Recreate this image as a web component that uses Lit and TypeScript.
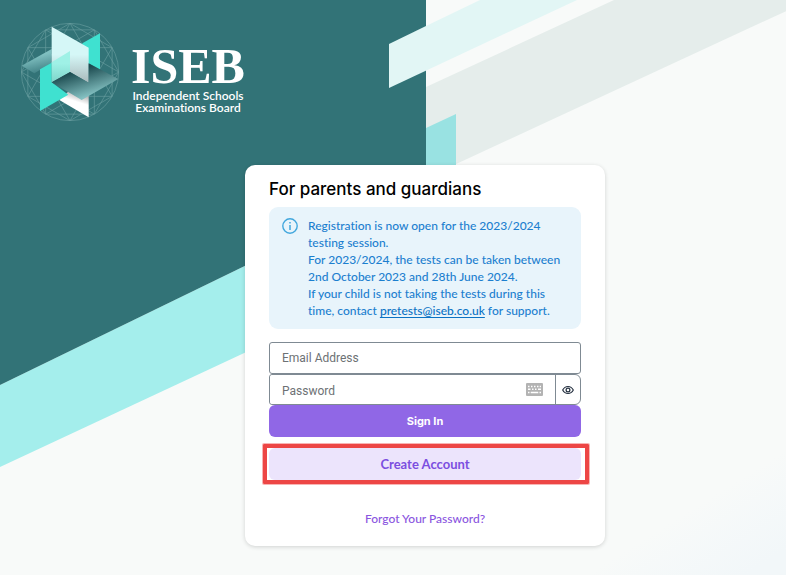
import { LitElement, html, css, svg } from "lit";
import { customElement, state } from "lit/decorators.js";

@customElement("iseb-logo")
export class IsebLogo extends LitElement {
  static styles = css`
    :host {
      display: flex;
      align-items: center;
      gap: 11px;
      color: #fff;
    }
    .mark {
      width: 100px;
      height: 100px;
      flex: none;
    }
    .words {
      display: flex;
      flex-direction: column;
      align-items: center;
      padding-top: 12px;
    }
    .name {
      font: bold 50px/48px "Liberation Serif", serif;
    }
    .full {
      font: 600 12px/12px Lato, sans-serif;
      font-variant-ligatures: none;
      text-align: center;
    }
  `;

  private spokes() {
    const points = Array.from({ length: 12 }, (_, i) => {
      const a = (i * Math.PI) / 6;
      return [210 + 146 * Math.cos(a), 186 + 146 * Math.sin(a)];
    });
    return points.map((p, i) =>
      [2, 4].map((step) => {
        const q = points[(i + step) % 12];
        return svg`<line x1=${p[0]} y1=${p[1]} x2=${q[0]} y2=${q[1]} />`;
      })
    );
  }

  render() {
    return html`
      <svg class="mark" viewBox="60 36 300 300" aria-hidden="true">
        <defs>
          <linearGradient id="pale" x1="0" y1="0" x2="0" y2="1">
            <stop offset="0.5" stop-color="#d5f7f7" />
            <stop offset="1" stop-color="#a9b9bb" />
          </linearGradient>
          <linearGradient id="plane" x1="0.3" y1="0.2" x2="0.7" y2="0.9">
            <stop offset="0.05" stop-color="#1c4b50" />
            <stop offset="0.9" stop-color="#82bfc0" />
          </linearGradient>
          <linearGradient id="wing" x1="0" y1="0" x2="0.3" y2="1">
            <stop offset="0.4" stop-color="#7fbfc0" />
            <stop offset="1" stop-color="#46868a" />
          </linearGradient>
          <linearGradient id="foot" x1="0.6" y1="0.1" x2="0.4" y2="0.7">
            <stop offset="0" stop-color="#b3b3b3" />
            <stop offset="0.5" stop-color="#fff" />
          </linearGradient>
          <linearGradient id="mint" x1="0" y1="0" x2="0" y2="1">
            <stop offset="0.4" stop-color="#9ff1e6" />
            <stop offset="1" stop-color="#7dd5ca" />
          </linearGradient>
        </defs>
        <g fill="none" stroke="#9cc5c5" stroke-width="2" opacity="0.5">
          <circle cx="210" cy="186" r="146" />
          ${this.spokes()}
        </g>
        <path fill="#3fe1d0" d="M300 70V181L247 151V100Z" />
        <path fill="url(#wing)" d="M65 167L155 117V160L103 190Z" />
        <path fill="url(#foot)" d="M266 240V322L178 270L210 240Z" />
        <path fill="url(#pale)" d="M155 50L266 113V218L210 186L155 217Z" />
        <path fill="#3fe1d0" d="M120 178L155 158V217L205 254L120 303Z" />
        <path fill="url(#mint)" d="M155 157L210 123V186L155 217Z" />
        <path fill="url(#plane)" d="M155 217L210 186L266 218V160L355 207L245 270Z" />
      </svg>
      <div class="words">
        <span class="name">ISEB</span>
        <span class="full">Independent Schools<br />Examinations Board</span>
      </div>
    `;
  }
}

@customElement("app-root")
export class AppRoot extends LitElement {
  @state() private reveal = false;

  static styles = css`
    :host {
      display: block;
      position: relative;
      min-height: 100vh;
      overflow: hidden;
      background: #f8faf9;
      font-family: Inter, "Open Sans", sans-serif;
      font-variant-ligatures: none;
    }
    *,
    *::after {
      box-sizing: border-box;
    }
    .backdrop {
      position: absolute;
      inset: 0;
      width: 100%;
      height: 100%;
    }
    .page {
      position: relative;
      display: flex;
      flex-direction: column;
      min-height: 100vh;
    }
    .header {
      padding: 22px 20px 0;
      display: flex;
    }
    .main {
      display: flex;
      justify-content: center;
      padding: 43px 0 24px 64px;
    }
    .card {
      width: 100%;
      max-width: 360px;
      padding: 12px 24px 18px;
      border-radius: 10px;
      background: #fff;
      box-shadow: 0 1px 4px rgba(0, 0, 0, 0.16);
    }
    .title {
      margin: 0 0 6px;
      font-size: 17px;
      line-height: 24px;
      font-weight: 500;
      color: #000;
    }
    .notice {
      display: flex;
      gap: 10px;
      padding: 10px 12px 10px 13px;
      border-radius: 9px;
      background: #e8f4fb;
      color: #1c7fcf;
      font: 500 12px/17px Lato, sans-serif;
      font-variant-ligatures: none;
    }
    .notice p {
      margin: 0;
    }
    .info {
      flex: none;
      width: 16px;
      height: 16px;
      margin-top: 1px;
    }
    .mail {
      color: #0b72c4;
      text-underline-offset: 2px;
    }
    .form {
      display: flex;
      flex-direction: column;
      margin-top: 13px;
    }
    .input {
      width: 100%;
      min-width: 0;
      height: 32px;
      padding: 0 12px;
      border: 1px solid #7f8a93;
      border-radius: 3px;
      background: #fff;
      font: 12px Roboto, "Noto Sans", sans-serif;
      color: #333;
    }
    .input::placeholder {
      color: #6d7174;
      opacity: 1;
    }
    .secret {
      display: flex;
      align-items: center;
      height: 31px;
      border: 1px solid #7f8a93;
      border-radius: 3px 6px 6px 3px;
      background: #fff;
    }
    .secret .input {
      flex: 1;
      height: 29px;
      padding-top: 2px;
      border: 0;
    }
    .keys {
      flex: none;
      width: 17px;
      height: 13px;
      margin-right: 12px;
    }
    .peek {
      flex: none;
      display: grid;
      place-items: center;
      width: 25px;
      height: 29px;
      padding: 0;
      border: 0;
      border-left: 1px solid #7f8a93;
      background: none;
    }
    .eye {
      width: 12px;
      height: 12px;
    }
    .button {
      width: 100%;
      height: 32px;
      padding: 0;
      border: 0;
      border-radius: 6px;
      background: #9067e6;
      color: #fff;
      font: 700 11px Inter, sans-serif;
    }
    .button.soft {
      display: block;
      background: #ece4fc;
      color: #7b4ee0;
      font: 700 13px Lato, sans-serif;
    }
    .marked {
      position: relative;
      margin-top: 11px;
    }
    .marked::after {
      content: "";
      position: absolute;
      inset: -4px -8px -4px -6px;
      border: 4px solid #ed4645;
      border-radius: 1px;
      box-shadow: 0 0 0 1px #f8b4b3;
      pointer-events: none;
    }
    .forgot {
      align-self: center;
      margin-top: 30px;
      font: 500 12px/18px Lato, sans-serif;
      color: #8a55e0;
      text-decoration: none;
    }
  `;

  render() {
    return html`
      <svg class="backdrop" viewBox="0 0 786 575" preserveAspectRatio="xMinYMin slice" aria-hidden="true">
        <defs>
          <linearGradient id="mist" x1="0" y1="0" x2="1" y2="1">
            <stop offset="0.5" stop-color="#f1f7fa" stop-opacity="0" />
            <stop offset="0.9" stop-color="#f2f7f9" />
          </linearGradient>
        </defs>
        <path fill="url(#mist)" d="M586 450H786V575H586Z" />
        <path fill="#e5edeb" d="M426 87L614 0H810L426 178Z" />
        <path fill="#99e2e2" d="M426 128L456 114V254L426 268Z" />
        <path fill="#a4eeec" d="M0 385L426 178V268L0 467Z" />
        <path fill="#327377" d="M0 0H426V178L0 385Z" />
        <path fill="#e2f6f5" d="M389 44L426 26L480 0H577L389 88Z" />
      </svg>
      <div class="page">
        <header class="header"><iseb-logo></iseb-logo></header>
        <main class="main">
          <section class="card">
            <h1 class="title">For parents and guardians</h1>
            <div class="notice">
              <svg class="info" viewBox="0 0 16 16" fill="none" stroke="#42a7dd" aria-hidden="true">
                <circle cx="8" cy="8" r="7.2" stroke-width="1.4" />
                <path d="M8 7V12M8 4V5.6" stroke-width="1.5" />
              </svg>
              <p>
                Registration is now open for the 2023/2024 testing session.<br />
                For 2023/2024, the tests can be taken between 2nd October 2023 and 28th June 2024.<br />
                If your child is not taking the tests during this time, contact
                <a class="mail" href="mailto:pretests@iseb.co.uk">pretests@iseb.co.uk</a> for support.
              </p>
            </div>
            <form class="form" @submit=${(e: Event) => e.preventDefault()}>
              <input class="input" type="email" placeholder="Email Address" aria-label="Email Address" />
              <div class="secret">
                <input class="input" type=${this.reveal ? "text" : "password"} placeholder="Password" aria-label="Password" />
                <svg class="keys" viewBox="0 0 17 13" aria-hidden="true">
                  <rect width="17" height="13" rx="1" fill="#b3b3b3" />
                  <path stroke="#fff" stroke-width="1.4" fill="none" d="M2 3.5H3.5M5 3.5H6.5M8 3.5H9.5M11 3.5H12.5M13.7 3.5H15M2 6.3H4.5M6 6.3H7.5M9 6.3H10.5M12 6.3H15M2 9.5H3.5M4.7 9.5H12.3M13.5 9.5H15" />
                </svg>
                <button class="peek" type="button" aria-label="Show password" @click=${() => (this.reveal = !this.reveal)}>
                  <svg class="eye" viewBox="0 0 12 12" fill="none" stroke="#253040" stroke-width="1.2" aria-hidden="true">
                    <path d="M0.7 6C2 3.6 3.8 2.5 6 2.5S10 3.6 11.3 6C10 8.4 8.2 9.5 6 9.5S2 8.4 0.7 6Z" />
                    <circle cx="6" cy="6" r="1.9" />
                  </svg>
                </button>
              </div>
              <button class="button" type="submit">Sign In</button>
              <div class="marked">
                <button class="button soft" type="button">Create Account</button>
              </div>
              <a class="forgot" href="#forgot">Forgot Your Password?</a>
            </form>
          </section>
        </main>
      </div>
    `;
  }
}
